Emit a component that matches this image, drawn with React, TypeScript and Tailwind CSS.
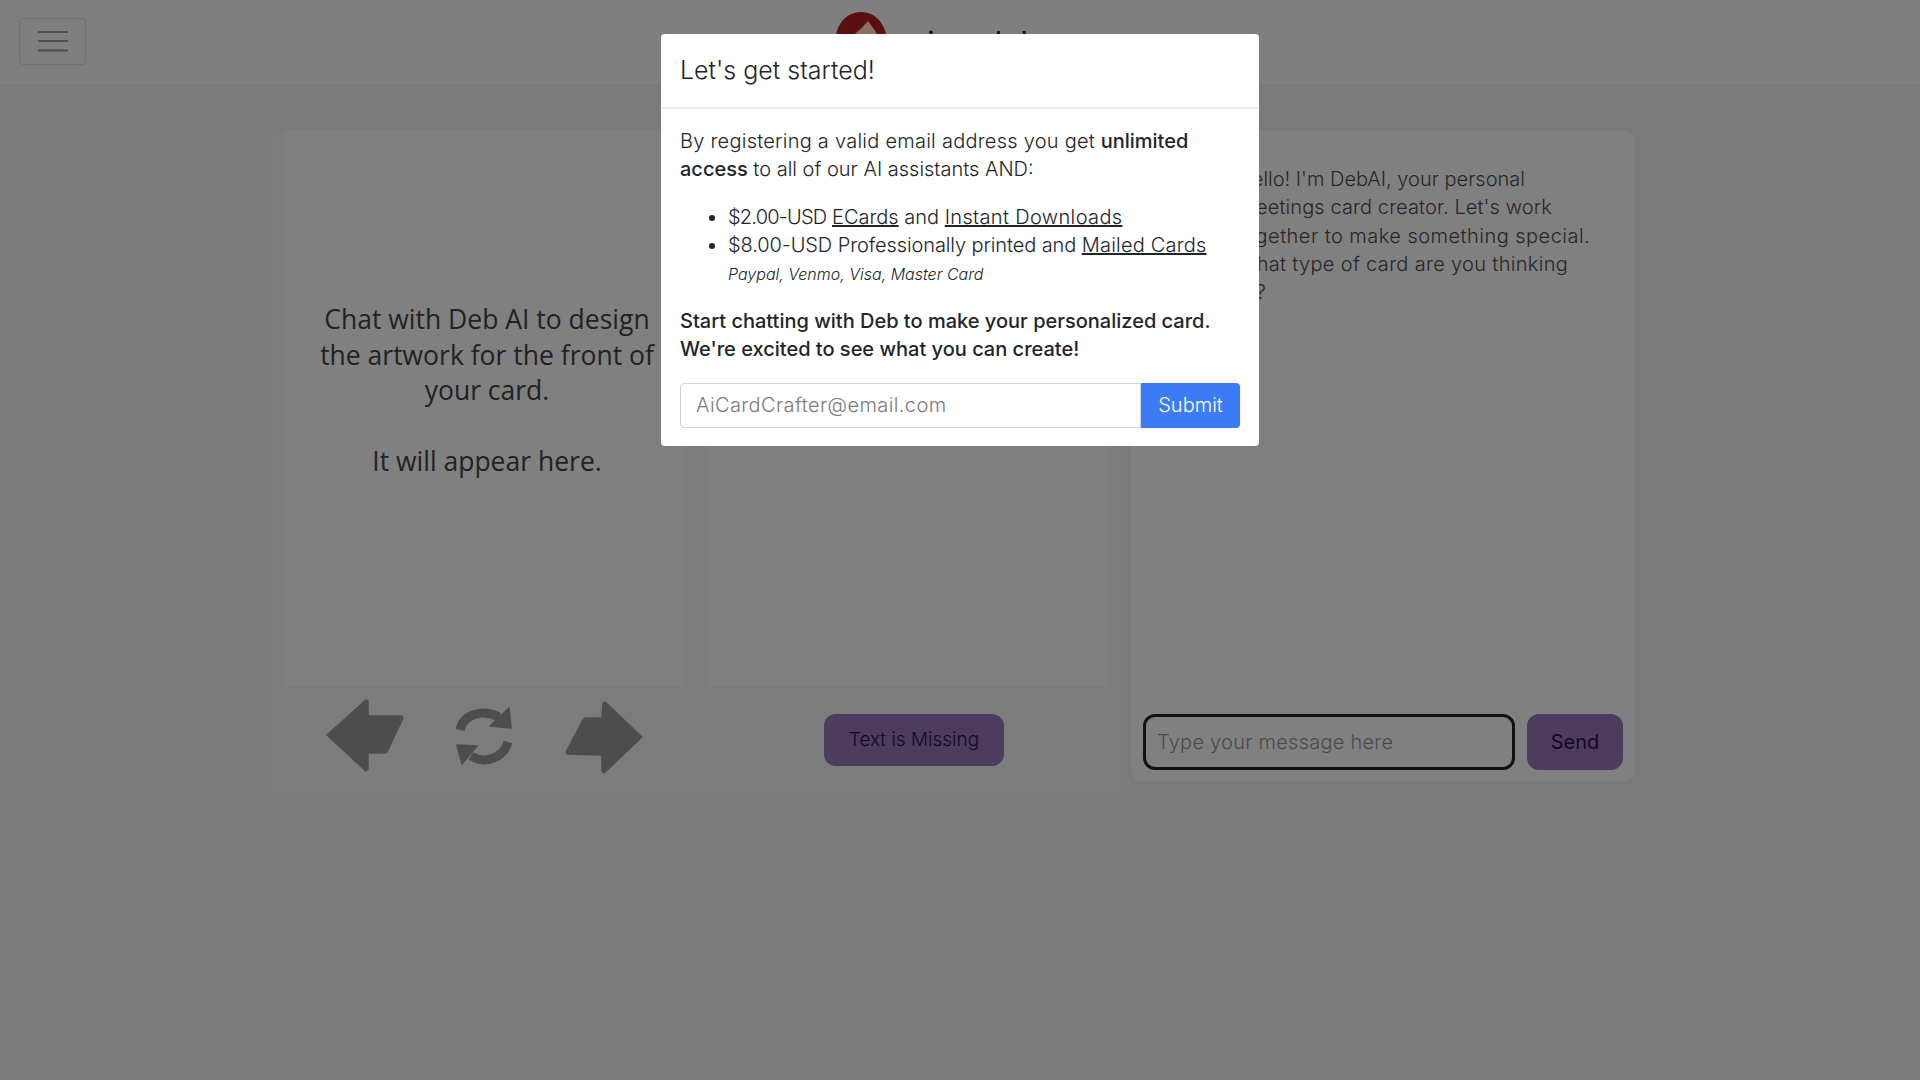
import React from "react";

function LeftArrow() {
  return (
    <svg width="80" height="74" viewBox="0 0 80 74">
      <path d="M2 37 L41 2 L43 3 L43 18 L77 18 L78 20 L62 54 L60 55 L43 55 L43 71 L41 73 Z" fill="#4d4d4d" stroke="#4d4d4d" strokeWidth="1.5" strokeLinejoin="round" />
    </svg>
  );
}

function RightArrow() {
  return (
    <svg width="80" height="74" viewBox="0 0 80 74">
      <path d="M78 37 L41 2 L39 3 L38 18 L21 18 L19 20 L2 52 L3 54 L38 55 L38 71 L40 73 Z" fill="#4d4d4d" stroke="#4d4d4d" strokeWidth="1.5" strokeLinejoin="round" />
    </svg>
  );
}

function Refresh() {
  return (
    <svg width="60" height="62" viewBox="0 0 60 62" fill="none">
      <path d="M6 25 C9 10 28 3 45 12" stroke="#4d4d4d" strokeWidth="9" />
      <path d="M55 3 L57 23 L36 21 Z" fill="#4d4d4d" stroke="#4d4d4d" strokeWidth="1.5" strokeLinejoin="round" />
      <path d="M54 37 C50 52 32 60 17 51" stroke="#4d4d4d" strokeWidth="9" />
      <path d="M3 40 L23 41 L8 59 Z" fill="#4d4d4d" stroke="#4d4d4d" strokeWidth="1.5" strokeLinejoin="round" />
    </svg>
  );
}

function Logo() {
  return (
    <svg width="52" height="60" viewBox="0 0 52 60">
      <path d="M26 0 C10 0 0 14 0 32 C0 46 2 54 6 60 L46 60 C50 54 52 46 52 32 C52 14 42 0 26 0 Z" fill="#5a1010" />
      <path d="M33 9 C29 14 24 18 20 22 L20 44 L43 44 L43 24 C40 18 36 13 33 9 Z" fill="#8a6e64" />
    </svg>
  );
}

export default function App() {
  return (
    <div className="relative min-h-[1080px] bg-[#7b7b7b] overflow-hidden font-['Inter','Noto_Sans',sans-serif]">
      <nav className="h-[85px] border-b border-[#787878] flex items-center pl-[19px] bg-[#7f7f7f]">
        <button className="w-[67px] h-[47px] mb-[2px] rounded border border-[#727272] flex items-center justify-center">
          <svg width="30" height="22" viewBox="0 0 30 22" stroke="#4d4d4d" strokeWidth="2.2" strokeLinecap="round">
            <path d="M1 2 H29 M1 11 H29 M1 20.5 H29" />
          </svg>
        </button>
        <div className="self-start mt-[12px] ml-[749px] flex gap-[22px]">
          <Logo />
          <span className="text-[32px] leading-[40px] mt-[12px] text-[#111]">aicardal</span>
        </div>
      </nav>

      <main className="flex pt-[45px] pl-[273px] gap-[11px]">
        <div className="w-[847px] h-[665px] bg-[#7c7c7c] rounded-lg">
          <div className="flex gap-[24px] pl-[11px]">
            <div className="w-[400px] h-[556px] bg-[#808080] flex flex-col items-center justify-center font-['Open_Sans',sans-serif] text-[26.5px] leading-[35.5px] text-[#222] text-center pl-[6px] pb-[34px]">
              <p>Chat with Deb AI to design<br />the artwork for the front of<br />your card.</p>
              <p className="mt-[35.5px]">It will appear here.</p>
            </div>
            <div className="w-[400px] h-[556px] bg-[#808080]" />
          </div>
          <div className="flex items-start pl-[52px] pt-[12px]">
            <LeftArrow />
            <div className="ml-[49px] mt-[7px]">
              <Refresh />
            </div>
            <div className="ml-[50px] mt-[2px]">
              <RightArrow />
            </div>
            <button className="ml-[180px] mt-[16px] w-[180px] h-[52px] rounded-xl bg-[#4c3c5e] text-[#12081f] text-[19px] font-light">
              Text is Missing
            </button>
          </div>
        </div>

        <div className="w-[504px] h-[652px] bg-[#808080] rounded-xl shadow-[0_0_10px_rgba(0,0,0,0.05)] flex flex-col p-[12px]">
          <div className="flex-1 pl-[94px] pt-[23px] text-[20px] leading-[28.3px] text-[#262626] font-light whitespace-nowrap">
            <p>Hello! I'm DebAI, your personal</p>
            <p className="tracking-[0.1px]">greetings card creator. Let's work</p>
            <p className="tracking-[0.47px]">together to make something special.</p>
            <p className="tracking-[0.33px]">What type of card are you thinking</p>
            <p>of?</p>
          </div>
          <div className="flex gap-[12px]">
            <div className="w-[372px] h-[56px] border-[3px] border-[#111] rounded-xl flex items-center pl-[11px] text-[20px] tracking-[0.25px] text-[#4a4a4a] font-light">
              Type your message here
            </div>
            <button className="w-[96px] h-[56px] rounded-xl bg-[#4c3c5e] text-[#12081f] text-[20px]">Send</button>
          </div>
        </div>
      </main>

      {/* modal over the dimmed page */}
      <div className="absolute left-[661px] top-[34px] w-[598px] h-[412px] bg-white rounded text-[#212529] text-[20px]">
        <div className="h-[75px] border-b-2 border-[#e9ecef] flex items-center px-[19px] pt-[1px]">
          <h5 className="text-[25px] font-light">Let's get started!</h5>
        </div>
        <div className="px-[19px] pt-[18px] leading-[28.3px]">
          <p className="font-light">
            <span className="tracking-[0.25px]">By registering a valid email address you get</span> <b className="font-medium">unlimited access</b> to all of our AI assistants AND:
          </p>
          <ul className="list-disc pl-[48px] mt-[19px] font-light">
            <li>
              <span className="tracking-[-0.8px]">$2.00-USD</span> <u>ECards</u> and <u className="tracking-[0.35px]">Instant Downloads</u>
            </li>
            <li>
              <span className="tracking-[-0.1px]">$8.00-USD Professionally printed and</span> <u className="tracking-[0.2px]">Mailed Cards</u>
            </li>
          </ul>
          <p className="pl-[48px] text-[16px] italic font-light leading-[30px]">Paypal, Venmo, Visa, Master Card</p>
          <p className="mt-[18px] font-medium">
            Start chatting with Deb to make your personalized card.<br />We're excited to see what you can create!
          </p>
          <div className="flex mt-[19px] h-[45px]">
            <div className="flex-1 border border-[#ced4da] rounded-l flex items-center pl-[15px] text-[#7a7a7a] font-light tracking-[0.4px]">AiCardCrafter@email.com</div>
            <button className="w-[99px] bg-[#3b7cf6] text-white rounded-r font-light">Submit</button>
          </div>
        </div>
      </div>
    </div>
  );
}
